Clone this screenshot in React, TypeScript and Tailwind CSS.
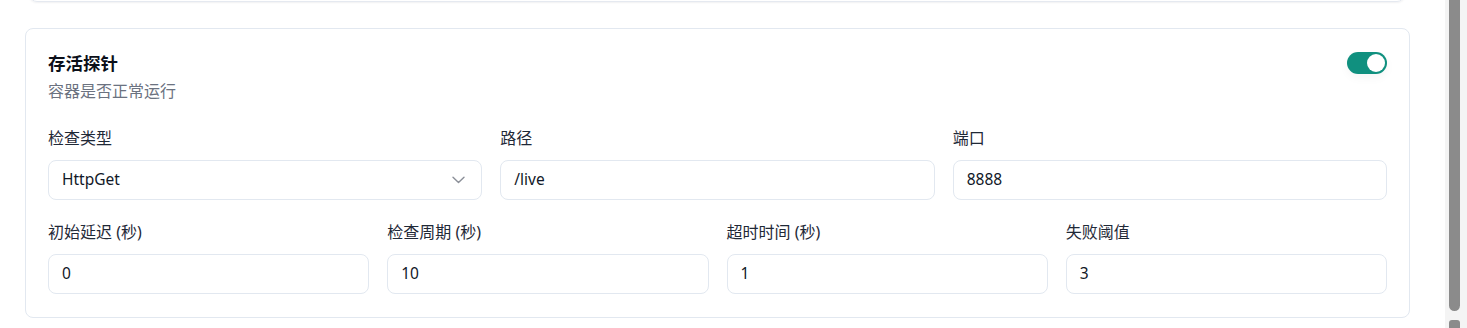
import React from "react";

const font = {
  fontFamily: '"Noto Sans", "Noto Sans CJK SC", sans-serif',
};

function Field({ label, value, select }: { label: string; value: string; select?: boolean }) {
  return (
    <div className="flex flex-col gap-[10px] min-w-0">
      <div className="text-[16px] leading-[24px] text-[#1f2937]">{label}</div>
      <div className="h-[40px] rounded-[8px] border border-[#e2e8f0] bg-white flex items-center justify-between pl-[13px] pr-[16px]">
        <span className="text-[15.5px] text-[#111827]">{value}</span>
        {select && (
          <svg width="13" height="8" viewBox="0 0 13 8" fill="none">
            <path d="M1 1.2l5.5 5.3 5.5-5.3" stroke="#8b8f98" strokeWidth="1.4" strokeLinecap="round" strokeLinejoin="round" />
          </svg>
        )}
      </div>
    </div>
  );
}

export default function App() {
  return (
    <div className="flex w-[1467px] h-[328px] overflow-hidden bg-white" style={font}>
      <div className="flex-1 flex flex-col pl-[25px] pr-[35px]">
        <div className="ml-[4px] mr-[5px] -mt-[20px] h-[22px] rounded-b-[8px] border border-[#e5e9f0] shadow-[0_1px_2px_rgba(15,23,42,0.06)]" />
        <div className="mt-[26px] rounded-[8px] border border-[#e2e8f0] px-[22px] pt-[21px] pb-[23px] flex flex-col">
          <div className="flex items-start justify-between">
            <div className="flex flex-col gap-[3px]">
              <div className="text-[17.5px] leading-[26px] font-bold text-[#0b0f19]">存活探针</div>
              <div className="text-[16px] leading-[24px] text-[#6b7280]">容器是否正常运行</div>
            </div>
            <div className="mt-[2px] w-[40px] h-[22px] rounded-full bg-[#10907f] flex items-center justify-end pr-[2px] shadow-[0_4px_10px_rgba(0,0,0,0.04)]">
              <div className="w-[18px] h-[18px] rounded-full bg-white" />
            </div>
          </div>
          <div className="mt-[23px] grid grid-cols-3 gap-x-[18px]">
            <Field label="检查类型" value="HttpGet" select />
            <Field label="路径" value="/live" />
            <Field label="端口" value="8888" />
          </div>
          <div className="mt-[20px] grid grid-cols-4 gap-x-[18px]">
            <Field label="初始延迟 (秒)" value="0" />
            <Field label="检查周期 (秒)" value="10" />
            <Field label="超时时间 (秒)" value="1" />
            <Field label="失败阈值" value="3" />
          </div>
        </div>
      </div>
      <div className="w-[22px] h-full bg-[#f4f4f4] flex flex-col items-start pl-[4px]">
        <div className="w-[11px] h-[315px] -mt-[4px] rounded-b-full bg-[#8b8b8b]" />
        <div className="mt-[9px] w-[11px] h-[8px] rounded-t-[3px] bg-[#8b8b8b]" />
      </div>
    </div>
  );
}
